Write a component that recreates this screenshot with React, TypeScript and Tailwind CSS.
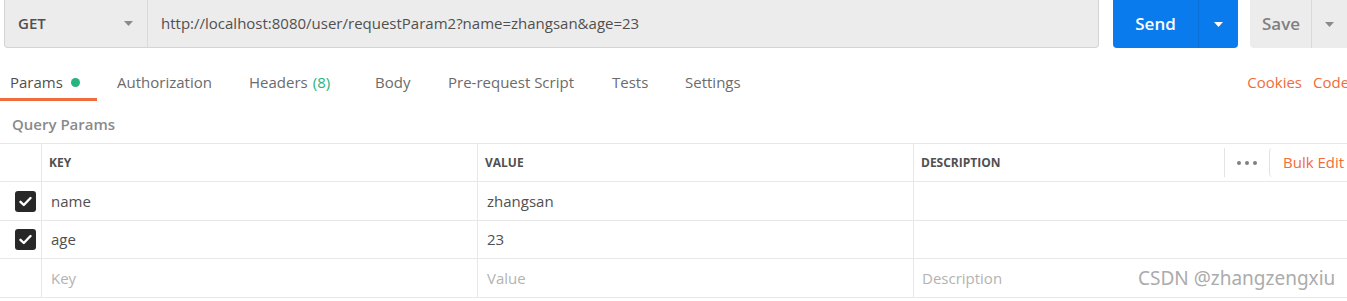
import React from "react";

function Caret({ color, className }: { color: string; className?: string }) {
  return (
    <svg width="9" height="5" viewBox="0 0 9 5" className={className}>
      <path d="M0 0 L9 0 L4.5 5 Z" fill={color} />
    </svg>
  );
}

function Check() {
  return (
    <div className="flex h-[21px] w-[21px] items-center justify-center rounded-[3px] bg-[#282828]">
      <svg width="13" height="11" viewBox="0 0 13 11">
        <path d="M1.5 5.8 L4.8 9 L11.5 2" fill="none" stroke="#ffffff" strokeWidth="2.4" strokeLinecap="round" strokeLinejoin="round" />
      </svg>
    </div>
  );
}

const tabs: { label: string; w: string }[] = [
  { label: "Authorization", w: "w-[132px]" },
  { label: "Headers", w: "w-[126px]" },
  { label: "Body", w: "w-[73px]" },
  { label: "Pre-request Script", w: "w-[164px]" },
  { label: "Tests", w: "w-[73px]" },
  { label: "Settings", w: "w-[100px]" },
];

function Row({
  h,
  checked,
  k,
  v,
  placeholder,
}: {
  h: string;
  checked?: boolean;
  k: string;
  v: string;
  placeholder?: boolean;
}) {
  const c = placeholder ? "text-[#b3b3b3]" : "text-[#505050]";
  return (
    <div className={`flex ${h} border-b border-[#e8e8e8] text-[15px]`}>
      <div className="flex w-[42px] shrink-0 items-center border-r border-[#e8e8e8] pl-[15px]">
        {checked ? <Check /> : null}
      </div>
      <div className={`flex w-[436px] shrink-0 items-center border-r border-[#e8e8e8] pl-[9px] ${c}`}>{k}</div>
      <div className={`flex w-[436px] shrink-0 items-center border-r border-[#e8e8e8] pl-[9px] ${c}`}>{v}</div>
      <div className={`flex flex-1 items-center pl-[8px] ${c}`}>{placeholder ? "Description" : ""}</div>
    </div>
  );
}

export default function App() {
  return (
    <div className="relative h-[301px] w-[1347px] overflow-hidden bg-white font-['Open_Sans',sans-serif] text-[#505050]">
      {/* URL bar */}
      <div className="flex h-[48px] w-[1400px] pl-[4px]">
        <div className="flex h-full w-[1095px] shrink-0 rounded-b-[4px] border-x border-b border-[#d4d4d4] bg-[#ececec]">
          <div className="flex h-full w-[143px] shrink-0 items-center border-r border-[#d9d9d9] pl-[13px] pr-[14px]">
            <span className="text-[15px] font-semibold text-[#505050]">GET</span>
            <Caret color="#8a8a8a" className="ml-auto" />
          </div>
          <div className="flex items-center pl-[13px] text-[15px] text-[#505050]">
            http://localhost:8080/user/requestParam2?name=zhangsan&amp;age=23
          </div>
        </div>
        <div className="ml-[14px] flex h-full w-[125px] shrink-0 rounded-b-[4px] bg-[#097bed]">
          <div className="flex w-[86px] items-center justify-center border-r border-[#0a6fd8] text-[17px] font-semibold text-white">
            Send
          </div>
          <div className="flex flex-1 items-center justify-center">
            <Caret color="#ffffff" />
          </div>
        </div>
        <div className="ml-[12px] flex h-full w-[100px] shrink-0 rounded-b-[4px] bg-[#ececec]">
          <div className="flex w-[62px] items-center justify-center border-r border-[#d9d9d9] pl-[1px] text-[17px] font-semibold text-[#808080]">
            Save
          </div>
          <div className="flex flex-1 items-center pl-[13px]">
            <Caret color="#8a8a8a" />
          </div>
        </div>
      </div>

      {/* Tabs */}
      <div className="flex h-[53px] items-stretch text-[15px]">
        <div className="flex w-[97px] shrink-0 flex-col">
          <div className="flex h-[50px] items-center pl-[10px] pt-[18px]">
            <span className="text-[#505050]">Params</span>
            <span className="ml-[8px] h-[9px] w-[9px] rounded-full bg-[#26b47f]" />
          </div>
          <div className="h-[3px] bg-[#f26b3a]" />
        </div>
        {tabs.map((t) => (
          <div key={t.label} className={`flex h-[50px] shrink-0 items-center pl-[20px] pt-[18px] ${t.w}`}>
            <span className="text-[#6b6b6b]">{t.label}</span>
            {t.label === "Headers" ? <span className="ml-[5px] text-[#26b47f]">(8)</span> : null}
          </div>
        ))}
        <div className="ml-auto flex h-[50px] items-center gap-[11px] pt-[18px] text-[#f26b3a]">
          <span>Cookies</span>
          <span className="w-[34px] overflow-hidden whitespace-nowrap">Code</span>
        </div>
      </div>

      {/* Query Params */}
      <div className="flex h-[42px] items-start pl-[12px] pt-[13px] text-[15px] font-semibold leading-[20px] text-[#8a8a8a]">
        Query Params
      </div>

      {/* Table */}
      <div className="border-t border-[#e8e8e8]">
        <div className="flex h-[38px] border-b border-[#e8e8e8] text-[12px] font-bold text-[#505050]">
          <div className="w-[42px] shrink-0 border-r border-[#e8e8e8]" />
          <div className="flex w-[436px] shrink-0 items-center border-r border-[#e8e8e8] pl-[7px]">KEY</div>
          <div className="flex w-[436px] shrink-0 items-center border-r border-[#e8e8e8] pl-[7px]">VALUE</div>
          <div className="flex flex-1 items-center pl-[7px]">
            <span>DESCRIPTION</span>
            <div className="ml-auto flex h-full items-center">
              <div className="h-[29px] w-[1px] bg-[#e3e3e3]" />
              <div className="flex items-center gap-[4px] pl-[12px] pr-[12px]">
                <span className="h-[4px] w-[4px] rounded-full bg-[#808080]" />
                <span className="h-[4px] w-[4px] rounded-full bg-[#808080]" />
                <span className="h-[4px] w-[4px] rounded-full bg-[#808080]" />
              </div>
              <div className="h-[29px] w-[6px] rounded-l-[4px] border-l border-[#e3e3e3]" />
              <span className="w-[72px] whitespace-nowrap pl-[8px] text-[15px] font-normal text-[#f26b3a]">Bulk Edit</span>
            </div>
          </div>
        </div>
        <Row h="h-[39px]" checked k="name" v="zhangsan" />
        <Row h="h-[38px]" checked k="age" v="23" />
        <Row h="h-[39px]" k="Key" v="Value" placeholder />
      </div>

      {/* Watermark */}
      <div className="pointer-events-none absolute left-[1138px] top-[264px] font-['Noto_Sans',sans-serif] text-[19px] text-[#ababab]">
        CSDN @zhangzengxiu
      </div>
    </div>
  );
}
